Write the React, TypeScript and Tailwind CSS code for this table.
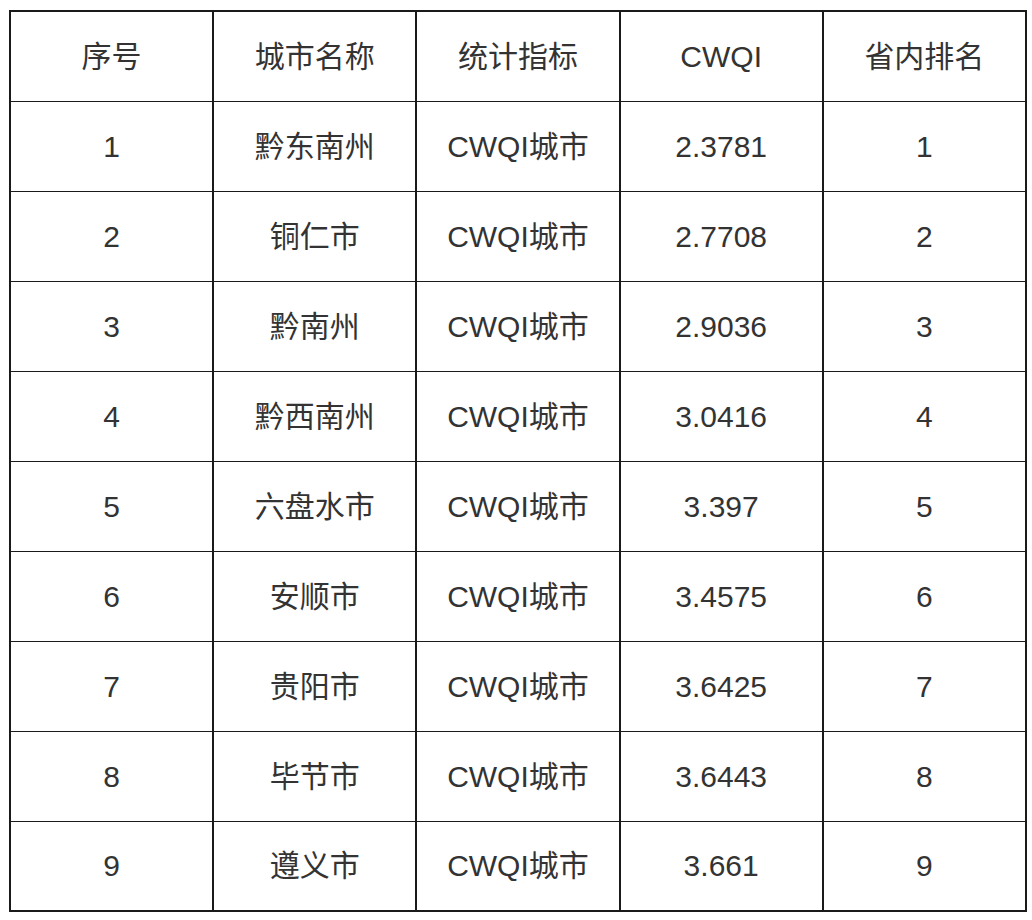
const headers = ['序号', '城市名称', '统计指标', 'CWQI', '省内排名']

const rows = [
  ['1', '黔东南州', 'CWQI城市', '2.3781', '1'],
  ['2', '铜仁市', 'CWQI城市', '2.7708', '2'],
  ['3', '黔南州', 'CWQI城市', '2.9036', '3'],
  ['4', '黔西南州', 'CWQI城市', '3.0416', '4'],
  ['5', '六盘水市', 'CWQI城市', '3.397', '5'],
  ['6', '安顺市', 'CWQI城市', '3.4575', '6'],
  ['7', '贵阳市', 'CWQI城市', '3.6425', '7'],
  ['8', '毕节市', 'CWQI城市', '3.6443', '8'],
  ['9', '遵义市', 'CWQI城市', '3.661', '9'],
]

const cell = 'h-[90px] border-y border-x-2 border-[#1a1a1a] text-center align-middle font-normal'

export default function App() {
  return (
    <div className="min-h-[920px] bg-white pl-[9px] pt-[10px] text-[30px] text-[#333] font-['Liberation_Sans','Noto_Sans_CJK_SC',sans-serif]">
      <table className="w-[1018px] table-fixed border-collapse border-2 border-[#1a1a1a]">
        <thead>
          <tr>
            {headers.map((h) => (
              <th key={h} className={cell}>{h}</th>
            ))}
          </tr>
        </thead>
        <tbody>
          {rows.map((r) => (
            <tr key={r[0]}>
              {r.map((v, i) => (
                <td key={i} className={cell}>{v}</td>
              ))}
            </tr>
          ))}
        </tbody>
      </table>
    </div>
  )
}
